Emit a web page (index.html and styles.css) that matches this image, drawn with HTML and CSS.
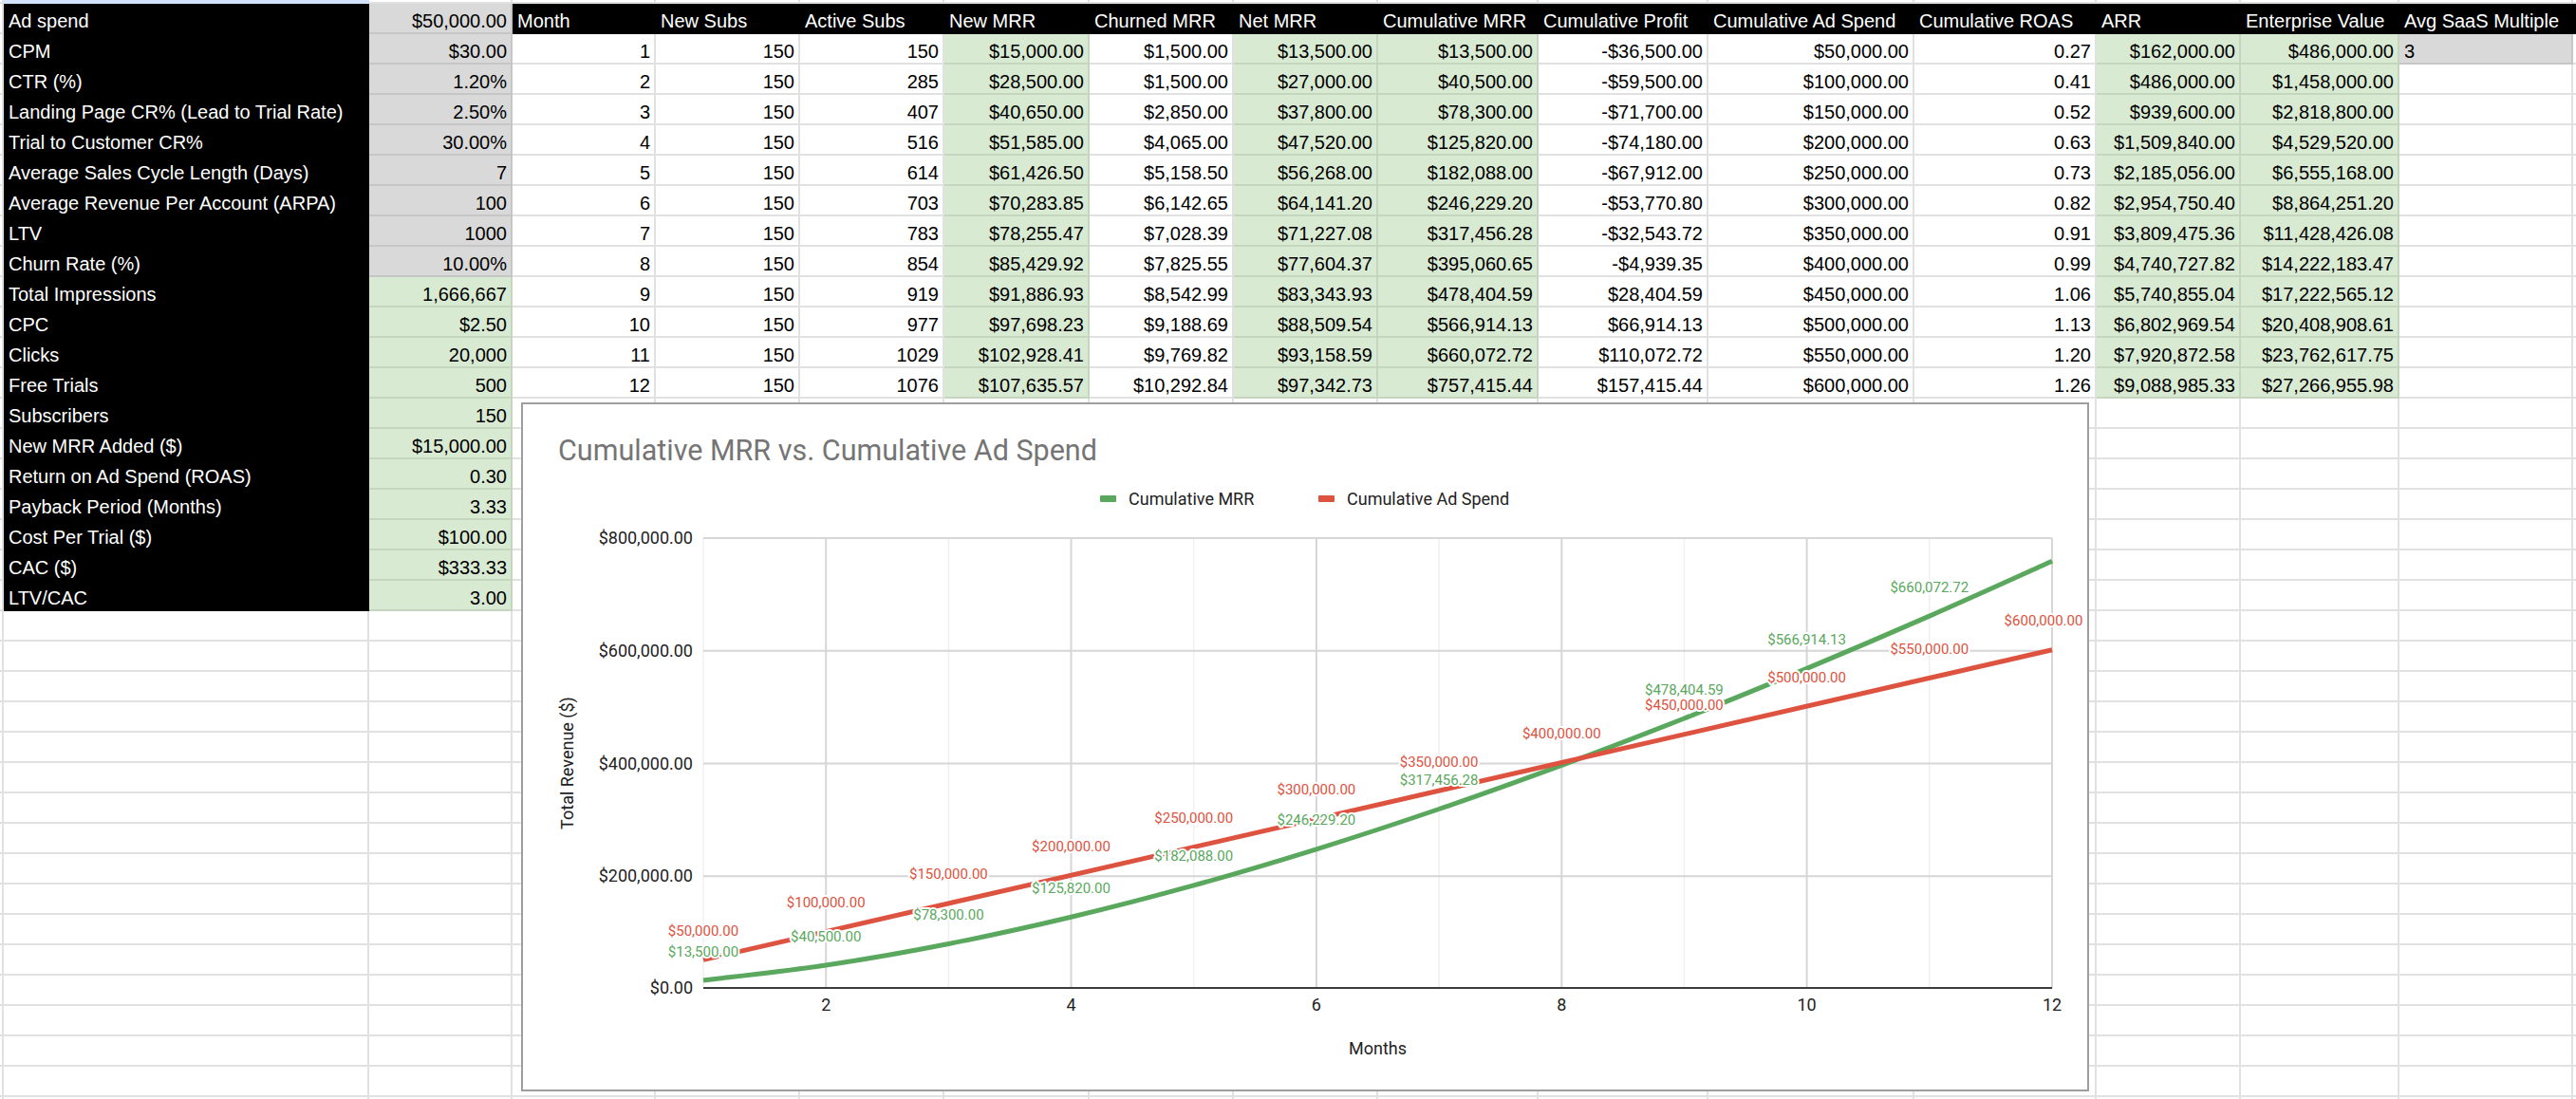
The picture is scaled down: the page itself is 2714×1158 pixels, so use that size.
FILE: index.html
```html
<!DOCTYPE html>
<html lang="en">
<head>
<meta charset="utf-8">
<title>SaaS Ad Spend Model</title>
<link rel="stylesheet" href="styles.css">
</head>
<body>
<div class="sheet">
  <div class="sel"></div>

  <div class="c lab">Ad spend</div><div class="c gr">$50,000.00</div>
  <div class="c hd">Month</div><div class="c hd">New Subs</div><div class="c hd">Active Subs</div><div class="c hd">New MRR</div><div class="c hd">Churned MRR</div><div class="c hd">Net MRR</div><div class="c hd">Cumulative MRR</div><div class="c hd">Cumulative Profit</div><div class="c hd">Cumulative Ad Spend</div><div class="c hd">Cumulative ROAS</div><div class="c hd">ARR</div><div class="c hd">Enterprise Value</div><div class="c hd">Avg SaaS Multiple</div><div class="c hd"></div>

  <div class="c lab">CPM</div><div class="c gr">$30.00</div>
  <div class="c">1</div><div class="c">150</div><div class="c">150</div><div class="c gn">$15,000.00</div><div class="c">$1,500.00</div><div class="c gn">$13,500.00</div><div class="c gn">$13,500.00</div><div class="c">-$36,500.00</div><div class="c">$50,000.00</div><div class="c">0.27</div><div class="c gn">$162,000.00</div><div class="c gn">$486,000.00</div><div class="c gr l">3</div>

  <div class="c lab">CTR (%)</div><div class="c gr">1.20%</div>
  <div class="c">2</div><div class="c">150</div><div class="c">285</div><div class="c gn">$28,500.00</div><div class="c">$1,500.00</div><div class="c gn">$27,000.00</div><div class="c gn">$40,500.00</div><div class="c">-$59,500.00</div><div class="c">$100,000.00</div><div class="c">0.41</div><div class="c gn">$486,000.00</div><div class="c gn">$1,458,000.00</div>

  <div class="c lab">Landing Page CR% (Lead to Trial Rate)</div><div class="c gr">2.50%</div>
  <div class="c">3</div><div class="c">150</div><div class="c">407</div><div class="c gn">$40,650.00</div><div class="c">$2,850.00</div><div class="c gn">$37,800.00</div><div class="c gn">$78,300.00</div><div class="c">-$71,700.00</div><div class="c">$150,000.00</div><div class="c">0.52</div><div class="c gn">$939,600.00</div><div class="c gn">$2,818,800.00</div>

  <div class="c lab">Trial to Customer CR%</div><div class="c gr">30.00%</div>
  <div class="c">4</div><div class="c">150</div><div class="c">516</div><div class="c gn">$51,585.00</div><div class="c">$4,065.00</div><div class="c gn">$47,520.00</div><div class="c gn">$125,820.00</div><div class="c">-$74,180.00</div><div class="c">$200,000.00</div><div class="c">0.63</div><div class="c gn">$1,509,840.00</div><div class="c gn">$4,529,520.00</div>

  <div class="c lab">Average Sales Cycle Length (Days)</div><div class="c gr">7</div>
  <div class="c">5</div><div class="c">150</div><div class="c">614</div><div class="c gn">$61,426.50</div><div class="c">$5,158.50</div><div class="c gn">$56,268.00</div><div class="c gn">$182,088.00</div><div class="c">-$67,912.00</div><div class="c">$250,000.00</div><div class="c">0.73</div><div class="c gn">$2,185,056.00</div><div class="c gn">$6,555,168.00</div>

  <div class="c lab">Average Revenue Per Account (ARPA)</div><div class="c gr">100</div>
  <div class="c">6</div><div class="c">150</div><div class="c">703</div><div class="c gn">$70,283.85</div><div class="c">$6,142.65</div><div class="c gn">$64,141.20</div><div class="c gn">$246,229.20</div><div class="c">-$53,770.80</div><div class="c">$300,000.00</div><div class="c">0.82</div><div class="c gn">$2,954,750.40</div><div class="c gn">$8,864,251.20</div>

  <div class="c lab">LTV</div><div class="c gr">1000</div>
  <div class="c">7</div><div class="c">150</div><div class="c">783</div><div class="c gn">$78,255.47</div><div class="c">$7,028.39</div><div class="c gn">$71,227.08</div><div class="c gn">$317,456.28</div><div class="c">-$32,543.72</div><div class="c">$350,000.00</div><div class="c">0.91</div><div class="c gn">$3,809,475.36</div><div class="c gn">$11,428,426.08</div>

  <div class="c lab">Churn Rate (%)</div><div class="c gr">10.00%</div>
  <div class="c">8</div><div class="c">150</div><div class="c">854</div><div class="c gn">$85,429.92</div><div class="c">$7,825.55</div><div class="c gn">$77,604.37</div><div class="c gn">$395,060.65</div><div class="c">-$4,939.35</div><div class="c">$400,000.00</div><div class="c">0.99</div><div class="c gn">$4,740,727.82</div><div class="c gn">$14,222,183.47</div>

  <div class="c lab">Total Impressions</div><div class="c gn">1,666,667</div>
  <div class="c">9</div><div class="c">150</div><div class="c">919</div><div class="c gn">$91,886.93</div><div class="c">$8,542.99</div><div class="c gn">$83,343.93</div><div class="c gn">$478,404.59</div><div class="c">$28,404.59</div><div class="c">$450,000.00</div><div class="c">1.06</div><div class="c gn">$5,740,855.04</div><div class="c gn">$17,222,565.12</div>

  <div class="c lab">CPC</div><div class="c gn">$2.50</div>
  <div class="c">10</div><div class="c">150</div><div class="c">977</div><div class="c gn">$97,698.23</div><div class="c">$9,188.69</div><div class="c gn">$88,509.54</div><div class="c gn">$566,914.13</div><div class="c">$66,914.13</div><div class="c">$500,000.00</div><div class="c">1.13</div><div class="c gn">$6,802,969.54</div><div class="c gn">$20,408,908.61</div>

  <div class="c lab">Clicks</div><div class="c gn">20,000</div>
  <div class="c">11</div><div class="c">150</div><div class="c">1029</div><div class="c gn">$102,928.41</div><div class="c">$9,769.82</div><div class="c gn">$93,158.59</div><div class="c gn">$660,072.72</div><div class="c">$110,072.72</div><div class="c">$550,000.00</div><div class="c">1.20</div><div class="c gn">$7,920,872.58</div><div class="c gn">$23,762,617.75</div>

  <div class="c lab">Free Trials</div><div class="c gn">500</div>
  <div class="c">12</div><div class="c">150</div><div class="c">1076</div><div class="c gn">$107,635.57</div><div class="c">$10,292.84</div><div class="c gn">$97,342.73</div><div class="c gn">$757,415.44</div><div class="c">$157,415.44</div><div class="c">$600,000.00</div><div class="c">1.26</div><div class="c gn">$9,088,985.33</div><div class="c gn">$27,266,955.98</div>

  <div class="c lab">Subscribers</div><div class="c gn">150</div>
  <div class="c lab">New MRR Added ($)</div><div class="c gn">$15,000.00</div>
  <div class="c lab">Return on Ad Spend (ROAS)</div><div class="c gn">0.30</div>
  <div class="c lab">Payback Period (Months)</div><div class="c gn">3.33</div>
  <div class="c lab">Cost Per Trial ($)</div><div class="c gn">$100.00</div>
  <div class="c lab">CAC ($)</div><div class="c gn">$333.33</div>
  <div class="c lab">LTV/CAC</div><div class="c gn">3.00</div>

  <div class="chart">
    <svg width="1648" height="722" viewBox="2 2 1648 722" xmlns="http://www.w3.org/2000/svg">
      <text class="title" x="39" y="61">Cumulative MRR vs. Cumulative Ad Spend</text>

      <rect class="sw-g" x="610" y="98" width="17" height="7" rx="1"/>
      <text class="lg" x="640" y="108">Cumulative MRR</text>
      <rect class="sw-r" x="840" y="98" width="17" height="7" rx="1"/>
      <text class="lg" x="870" y="108">Cumulative Ad Spend</text>

      <g class="minor">
        <line x1="192" y1="143" x2="192" y2="617"/>
        <line x1="450.4" y1="143" x2="450.4" y2="617"/>
        <line x1="708.7" y1="143" x2="708.7" y2="617"/>
        <line x1="967.1" y1="143" x2="967.1" y2="617"/>
        <line x1="1225.4" y1="143" x2="1225.4" y2="617"/>
        <line x1="1483.8" y1="143" x2="1483.8" y2="617"/>
      </g>
      <g class="major">
        <line x1="192" y1="143" x2="1613" y2="143"/>
        <line x1="192" y1="261.75" x2="1613" y2="261.75"/>
        <line x1="192" y1="380.5" x2="1613" y2="380.5"/>
        <line x1="192" y1="499.25" x2="1613" y2="499.25"/>
        <line x1="321.2" y1="143" x2="321.2" y2="617"/>
        <line x1="579.5" y1="143" x2="579.5" y2="617"/>
        <line x1="837.9" y1="143" x2="837.9" y2="617"/>
        <line x1="1096.3" y1="143" x2="1096.3" y2="617"/>
        <line x1="1354.6" y1="143" x2="1354.6" y2="617"/>
        <line x1="1613" y1="143" x2="1613" y2="617"/>
      </g>
      <line class="base" x1="192" y1="617" x2="1613" y2="617"/>

      <g class="ax yax">
        <text x="181" y="149">$800,000.00</text>
        <text x="181" y="267.75">$600,000.00</text>
        <text x="181" y="386.5">$400,000.00</text>
        <text x="181" y="505.25">$200,000.00</text>
        <text x="181" y="623">$0.00</text>
      </g>
      <g class="ax xax">
        <text x="321.2" y="641">2</text>
        <text x="579.5" y="641">4</text>
        <text x="837.9" y="641">6</text>
        <text x="1096.3" y="641">8</text>
        <text x="1354.6" y="641">10</text>
        <text x="1613" y="641">12</text>
      </g>
      <text class="ax xax" x="902.5" y="687">Months</text>
      <text class="ax xax" transform="translate(55 380) rotate(-90)">Total Revenue ($)</text>

      <path class="ln-g" d="M192,609 C213.5,606.3 278.1,599.4 321.2,593 C364.3,586.6 407.3,579 450.4,570.5 C493.5,562.1 536.4,552.6 579.5,542.3 C622.6,532 665.6,520.8 708.7,508.9 C751.8,497 794.8,484.2 837.9,470.8 C881,457.4 924,443.2 967.1,428.5 C1010.2,413.8 1053.2,398.3 1096.3,382.4 C1139.4,366.5 1182.3,350 1225.4,333 C1268.5,316 1311.5,298.4 1354.6,280.4 C1397.7,262.4 1440.7,244 1483.8,225.1 C1526.9,206.3 1591.5,176.9 1613,167.3"/>
      <path class="ln-r" d="M192,587.3 L1613,260.75"/>

      <g class="dl dl-g">
        <text x="192" y="583.5">$13,500.00</text>
        <text x="321.2" y="567.5">$40,500.00</text>
        <text x="450.4" y="545">$78,300.00</text>
        <text x="579.5" y="516.8">$125,820.00</text>
        <text x="708.7" y="483.4">$182,088.00</text>
        <text x="837.9" y="445.3">$246,229.20</text>
        <text x="967.1" y="403">$317,456.28</text>
        <text x="1225.4" y="307.5">$478,404.59</text>
        <text x="1354.6" y="254.9">$566,914.13</text>
        <text x="1483.8" y="199.6">$660,072.72</text>
      </g>
      <g class="dl dl-r">
        <text x="192" y="561.8">$50,000.00</text>
        <text x="321.2" y="532.1">$100,000.00</text>
        <text x="450.4" y="502.4">$150,000.00</text>
        <text x="579.5" y="472.75">$200,000.00</text>
        <text x="708.7" y="443.1">$250,000.00</text>
        <text x="837.9" y="413.4">$300,000.00</text>
        <text x="967.1" y="383.7">$350,000.00</text>
        <text x="1096.3" y="354">$400,000.00</text>
        <text x="1225.4" y="324.3">$450,000.00</text>
        <text x="1354.6" y="294.6">$500,000.00</text>
        <text x="1483.8" y="264.9">$550,000.00</text>
        <text x="1604" y="235.25">$600,000.00</text>
      </g>
    </svg>
  </div>
</div>
</body>
</html>
```

FILE: styles.css
```css
html, body {
  margin: 0;
  padding: 0;
  background: #ffffff;
}

body {
  width: 2714px;
  height: 1158px;
  overflow: hidden;
}

.sheet {
  position: relative;
  width: 2714px;
  height: 1158px;
  overflow: hidden;
  display: grid;
  grid-template-columns: 4px 385px 151px 151px 152px 152px 153px 152px 152px 169px 179px 217px 192px 152px 167px 183px 1fr;
  grid-template-rows: 4px;
  grid-auto-rows: 32px;
  align-content: start;
  font-family: "Liberation Sans", Arial, sans-serif;
  background-color: #ffffff;
  background:
    linear-gradient(#e1e1e1, #e1e1e1) 2px 0 / 2px 100% no-repeat,
    linear-gradient(#e1e1e1, #e1e1e1) 387px 0 / 2px 100% no-repeat,
    linear-gradient(#e1e1e1, #e1e1e1) 538px 0 / 2px 100% no-repeat,
    linear-gradient(#e1e1e1, #e1e1e1) 689px 0 / 2px 100% no-repeat,
    linear-gradient(#e1e1e1, #e1e1e1) 841px 0 / 2px 100% no-repeat,
    linear-gradient(#e1e1e1, #e1e1e1) 993px 0 / 2px 100% no-repeat,
    linear-gradient(#e1e1e1, #e1e1e1) 1146px 0 / 2px 100% no-repeat,
    linear-gradient(#e1e1e1, #e1e1e1) 1298px 0 / 2px 100% no-repeat,
    linear-gradient(#e1e1e1, #e1e1e1) 1450px 0 / 2px 100% no-repeat,
    linear-gradient(#e1e1e1, #e1e1e1) 1619px 0 / 2px 100% no-repeat,
    linear-gradient(#e1e1e1, #e1e1e1) 1798px 0 / 2px 100% no-repeat,
    linear-gradient(#e1e1e1, #e1e1e1) 2015px 0 / 2px 100% no-repeat,
    linear-gradient(#e1e1e1, #e1e1e1) 2207px 0 / 2px 100% no-repeat,
    linear-gradient(#e1e1e1, #e1e1e1) 2359px 0 / 2px 100% no-repeat,
    linear-gradient(#e1e1e1, #e1e1e1) 2526px 0 / 2px 100% no-repeat,
    linear-gradient(#e1e1e1, #e1e1e1) 2709px 0 / 2px 100% no-repeat,
    linear-gradient(to bottom, #ffffff 30px, #e1e1e1 30px) 0 4px / 100% 32px repeat-y;
}

.sel {
  grid-row: 1;
  grid-column: 2;
  background: #d3e3fd;
}

.c {
  box-sizing: border-box;
  display: flex;
  align-items: flex-end;
  justify-content: flex-end;
  padding: 0 4px 1px 5px;
  border-right: 2px solid #e1e1e1;
  border-bottom: 2px solid #e1e1e1;
  background: #ffffff;
  color: #000000;
  font-size: 20px;
  line-height: 22px;
  white-space: nowrap;
  overflow: hidden;
}

.lab {
  grid-column-start: 2;
  background: #000000;
  color: #ffffff;
  border-color: #000000;
  justify-content: flex-start;
}

.hd {
  background: #000000;
  color: #ffffff;
  border-color: #000000;
  justify-content: flex-start;
}

.gr {
  background: #d9d9d9;
  border-color: #c6c6c6;
}

.gn {
  background: #d9ead3;
  border-color: #c5d5bf;
}

.l {
  justify-content: flex-start;
}

/* floating chart */
.chart {
  position: absolute;
  left: 549px;
  top: 424px;
  width: 1652px;
  height: 726px;
  box-sizing: border-box;
  border: 2px solid #9e9e9e;
  background: #ffffff;
}

.chart svg {
  display: block;
  font-family: Roboto, "Liberation Sans", Arial, sans-serif;
}

.title {
  font-size: 30.5px;
  fill: #757575;
}

.lg {
  font-size: 18px;
  fill: #222222;
}

.sw-g { fill: #5aa85e; }
.sw-r { fill: #de5240; }

.minor line {
  stroke: #f0f0f0;
  stroke-width: 1.5;
}

.major line {
  stroke: #d6d6d6;
  stroke-width: 2;
}

.base {
  stroke: #3c3c3c;
  stroke-width: 2;
}

.ax {
  font-size: 18px;
  fill: #222222;
}

.yax text { text-anchor: end; }
.xax, .xax text { text-anchor: middle; }

.ln-g, .ln-r {
  fill: none;
  stroke-width: 5;
  stroke-linejoin: round;
}

.ln-g { stroke: #5aa85e; }
.ln-r { stroke: #de5240; }

.dl text {
  font-size: 15px;
  text-anchor: middle;
  stroke: #ffffff;
  stroke-width: 4;
  stroke-linejoin: round;
  paint-order: stroke;
}

.dl-g text { fill: #5aa85e; }
.dl-r text { fill: #de5240; }
```
